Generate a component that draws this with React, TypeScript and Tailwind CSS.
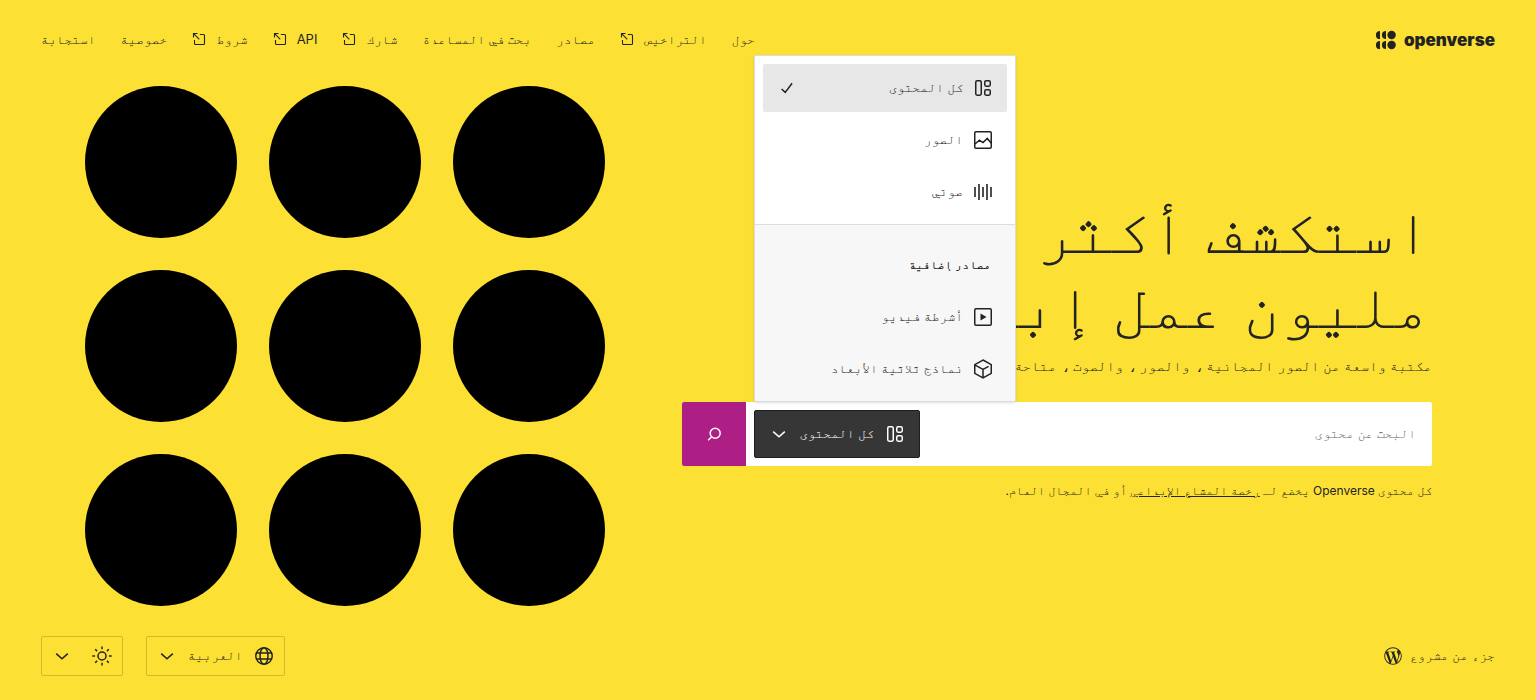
import type { ReactNode } from "react";
import { FaWordpressSimple } from "react-icons/fa";

type IconProps = { className?: string };

const Svg = ({ children, className = "size-6" }: { children: ReactNode; className?: string }) => (
  <svg
    viewBox="0 0 24 24"
    className={`shrink-0 ${className}`}
    fill="none"
    stroke="currentColor"
    strokeWidth="1.5"
    aria-hidden="true"
  >
    {children}
  </svg>
);

const AllIcon = (p: IconProps) => (
  <Svg {...p}>
    <rect x="4.75" y="4.75" width="5.5" height="14.5" rx="1.4" />
    <rect x="13.75" y="4.75" width="5.5" height="5.5" rx="1.4" />
    <rect x="13.75" y="13.75" width="5.5" height="5.5" rx="1.4" />
  </Svg>
);
const ImageIcon = (p: IconProps) => (
  <Svg {...p}>
    <rect x="3.75" y="3.75" width="16.5" height="16.5" rx="1.2" />
    <path d="M4 16l4.4-3.8 3.6 2.4 4.3-4.2 4 4.8" />
  </Svg>
);
const AudioIcon = (p: IconProps) => (
  <Svg {...p}>
    <path d="M4 7v10M8 4v16M12 7v10M16 4v16M20 7v10" strokeWidth="1.6" />
  </Svg>
);
const VideoIcon = (p: IconProps) => (
  <Svg {...p}>
    <rect x="3.75" y="3.75" width="16.5" height="16.5" rx="1.2" />
    <path d="M9.5 8.5v7l6-3.5z" fill="currentColor" stroke="none" />
  </Svg>
);
const ModelIcon = (p: IconProps) => (
  <Svg {...p}>
    <path d="M12 3l8.25 4.6v8.8L12 21l-8.25-4.6V7.6zM3.75 7.9L12 12.3l5.6-3M12 12.3V21" />
  </Svg>
);
const CheckIcon = (p: IconProps) => (
  <Svg {...p}>
    <path d="M6.6 13l3.6 3.4 6.9-9.2" />
  </Svg>
);
const ChevronIcon = (p: IconProps) => (
  <Svg {...p}>
    <path d="M6.2 9.6l5.8 5.2 5.8-5.2" />
  </Svg>
);
const SearchIcon = (p: IconProps) => (
  <Svg {...p}>
    <circle cx="13.2" cy="11.2" r="5" />
    <path d="M9.6 14.8L6.2 18.2" />
  </Svg>
);
const GlobeIcon = (p: IconProps) => (
  <Svg {...p}>
    <circle cx="12" cy="12" r="8.25" />
    <ellipse cx="12" cy="12" rx="4" ry="8.25" />
    <path d="M4.6 9h14.8M4.6 15h14.8" />
  </Svg>
);
const SunIcon = (p: IconProps) => (
  <Svg {...p}>
    <circle cx="12" cy="12" r="4" />
    <path d="M12 2.5v2.7M12 18.8v2.7M2.3 12H5M19 12h2.7M5.2 5.2l1.9 1.9M16.9 16.9l1.9 1.9M18.8 5.2l-1.9 1.9M7.1 16.9l-1.9 1.9" />
  </Svg>
);
const ExternalIcon = () => (
  <svg viewBox="0 1 16 16" className="size-4 shrink-0" fill="none" stroke="currentColor" strokeWidth="1.1" aria-hidden="true">
    <path d="M1.5 6.5v-4h4M1.7 2.7l5.6 5.6M7.8 3.5h3.7a1 1 0 0 1 1 1v8a1 1 0 0 1-1 1h-8a1 1 0 0 1-1-1V9" />
  </svg>
);

const LogoMark = () => (
  <svg viewBox="0 0 20 20" className="size-5" fill="currentColor" aria-hidden="true">
    <circle cx="15.6" cy="5" r="4.2" />
    <circle cx="15.6" cy="15" r="4.2" />
    <path d="M4 .9v8.2a4.1 4.1 0 0 1 0-8.2zM10 .9v8.2a4.1 4.1 0 0 1 0-8.2zM4 10.9v8.2a4.1 4.1 0 0 1 0-8.2zM10 10.9v8.2a4.1 4.1 0 0 1 0-8.2z" />
  </svg>
);

const navLinks = [
  { label: "حول" },
  { label: "التراخيص", external: true },
  { label: "مصادر" },
  { label: "بحث في المساعدة" },
  { label: "شارك", external: true },
  { label: "API", external: true },
  { label: "شروط", external: true },
  { label: "خصوصية" },
  { label: "استجابة" },
];

const contentTypes = [
  { label: "كل المحتوى", Icon: AllIcon, selected: true },
  { label: "الصور", Icon: ImageIcon },
  { label: "صوتي", Icon: AudioIcon },
];

const additionalTypes = [
  { label: "أشرطة فيديو", Icon: VideoIcon },
  { label: "نماذج ثلاثية الأبعاد", Icon: ModelIcon },
];

type MenuItemProps = { label: string; Icon: (p: IconProps) => ReactNode; selected?: boolean };

function MenuItem({ label, Icon, selected }: MenuItemProps) {
  return (
    <li>
      <button
        type="button"
        className={`flex h-12 w-full items-center gap-2 rounded-xs px-3 ${selected ? "bg-[#e7e7e7]" : ""}`}
      >
        <Icon />
        <span>{label}</span>
        {selected && <CheckIcon className="ms-auto size-6" />}
      </button>
    </li>
  );
}

function ContentMenu() {
  return (
    <div className="absolute bottom-full left-0 z-10 mb-2 w-[262px] overflow-hidden rounded-xs border border-[#dcdcdc] bg-white shadow">
      <ul className="flex flex-col gap-1 p-2">
        {contentTypes.map((t) => (
          <MenuItem key={t.label} {...t} />
        ))}
      </ul>
      <div className="border-t border-[#dcdcdc] bg-[#f7f7f7] p-2">
        <h2 className="px-4 pt-6 pb-5 text-xs leading-4 font-semibold">مصادر إضافية</h2>
        <ul className="flex flex-col gap-1">
          {additionalTypes.map((t) => (
            <MenuItem key={t.label} {...t} />
          ))}
        </ul>
      </div>
    </div>
  );
}

export default function App() {
  return (
    <div
      dir="rtl"
      lang="ar"
      className="flex min-h-screen flex-col bg-[#fde034] font-[family-name:Inter,FreeMono,'DejaVu_Sans_Mono',monospace] text-[13px] text-[#232323]"
    >
      <header className="flex h-20 items-center justify-between px-[41px]">
        <a href="#home" dir="ltr" className="flex items-center gap-2">
          <LogoMark />
          <span className="text-[17px] leading-5 font-black">openverse</span>
        </a>
        <nav>
          <ul className="flex items-center gap-[25px]">
            {navLinks.map(({ label, external }) => (
              <li key={label}>
                <a href="#nav" className="flex items-center gap-2">
                  {label}
                  {external && <ExternalIcon />}
                </a>
              </li>
            ))}
          </ul>
        </nav>
      </header>

      <main className="flex grow items-center justify-between ps-[104px] pe-[85px]">
        <div className="w-[750px]">
          <h1 className="text-[63px] leading-[75px]">استكشف أكثر من 700 مليون عمل إبداعي</h1>
          <p className="mt-[11px] text-sm leading-6">
            مكتبة واسعة من الصور المجانية ، والصور ، والصوت ، متاحة للاستخدام المجاني.
          </p>
          <form className="mt-6 flex h-16 rounded-xs bg-white">
            <input
              type="search"
              aria-label="البحث عن محتوى"
              placeholder="البحث عن محتوى"
              className="min-w-0 grow px-4 outline-none placeholder:text-[#666666]"
            />
            <div className="relative m-2 shrink-0">
              <button
                type="button"
                aria-expanded="true"
                className="flex h-12 items-center gap-[9px] rounded-xs border border-[#1e1e1e] bg-[#363636] px-3 text-white"
              >
                <AllIcon />
                <span>كل المحتوى</span>
                <ChevronIcon />
              </button>
              <ContentMenu />
            </div>
            <button
              type="button"
              aria-label="بحث"
              className="flex w-16 shrink-0 items-center justify-center rounded-l-xs bg-[#ad1f85] text-white"
            >
              <SearchIcon />
            </button>
          </form>
          <p className="mt-4 text-xs leading-[17px]">
            كل محتوى Openverse يخضع لـ{" "}
            <a href="#license" className="underline">
              رخصة المشاع الإبداعي
            </a>{" "}
            أو في المجال العام.
          </p>
        </div>
        <div className="grid grid-cols-3 gap-8">
          {Array.from({ length: 9 }, (_, i) => (
            <div key={i} className="size-[152px] rounded-full bg-black" />
          ))}
        </div>
      </main>

      <footer className="flex items-center justify-between px-[41px] py-6">
        <a href="#wordpress" className="flex items-center gap-2">
          <span>جزء من مشروع</span>
          <FaWordpressSimple className="size-[18px]" />
        </a>
        <div className="flex gap-[23px]">
          <button
            type="button"
            className="flex h-10 items-center gap-[9px] rounded-xs border border-[#232323]/20 px-2"
          >
            <GlobeIcon />
            <span>العربية</span>
            <ChevronIcon />
          </button>
          <button
            type="button"
            aria-label="المظهر"
            className="flex h-10 items-center gap-4 rounded-xs border border-[#232323]/20 px-2"
          >
            <SunIcon />
            <ChevronIcon />
          </button>
        </div>
      </footer>
    </div>
  );
}
